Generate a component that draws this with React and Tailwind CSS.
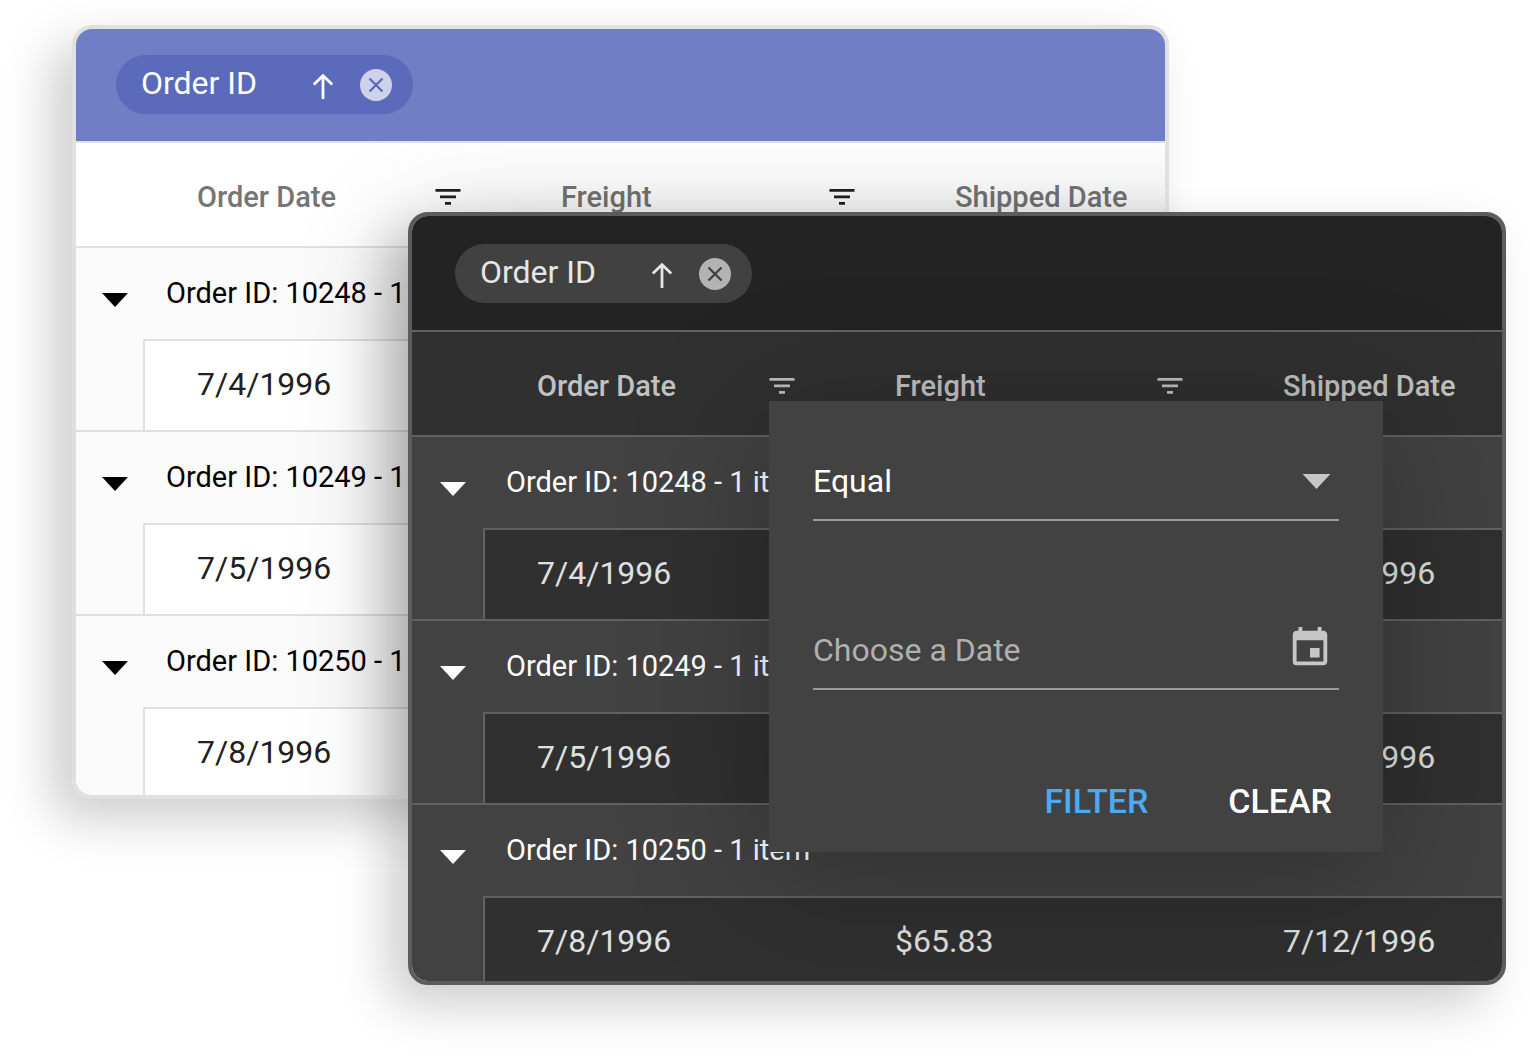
import { useState } from 'react'
import clsx from 'clsx'
import { MdEvent } from 'react-icons/md'

const pendingOrders = [
  { id: 10248, date: '7/4/1996' },
  { id: 10249, date: '7/5/1996' },
  { id: 10250, date: '7/8/1996' },
]

const shippedOrders = [
  { id: 10248, date: '7/4/1996', shipped: '7/16/1996' },
  { id: 10249, date: '7/5/1996', shipped: '7/10/1996' },
  { id: 10250, date: '7/8/1996', freight: '$65.83', shipped: '7/12/1996' },
]

const themes = {
  light: {
    line: 'border-[#e0e0e0]',
    bar: 'h-28 pl-10 pt-[26px] bg-[#707ec6]',
    chip: 'bg-[#5c6abb] text-white',
    close: 'text-[#ced2eb]',
    cross: 'stroke-[#5c6abb]',
    head: 'bg-white text-[#757575]',
    filter: 'text-[#212121]',
    group: 'bg-[#fafafa] text-black',
    cell: 'bg-white text-[#212121]',
    indentCol: 'w-[67px]',
    dateCol: 'w-[364px]',
    freightCol: 'w-[394px]',
    caret: 'pl-[26px]',
    firstInset: 'pl-[52px]',
    inset: 'pl-[54px]',
    lastRow: 'h-[88px]',
  },
  dark: {
    line: 'border-[#616161]',
    bar: 'h-[114px] pl-[43px] pt-7 bg-[#232323]',
    chip: 'bg-[#414141] text-[#e6e6e6]',
    close: 'text-[#b3b3b3]',
    cross: 'stroke-[#414141]',
    head: 'bg-[#303030] text-[#c1c1c1]',
    filter: 'text-[#bdbdbd]',
    group: 'bg-[#424242] text-white',
    cell: 'bg-[#303030] text-[#e0e0e0]',
    indentCol: 'w-[71px]',
    dateCol: 'w-[358px]',
    freightCol: 'w-[388px]',
    caret: 'pl-7',
    firstInset: 'pl-[52px]',
    inset: 'pl-[54px]',
    lastRow: 'h-[85px]',
  },
}

function ArrowUp() {
  return (
    <svg viewBox="0 0 32 32" className="size-8" fill="none" stroke="currentColor" strokeWidth="2.8">
      <path d="M16 30V7M6.8 15.6L16 6.6l9.2 9" />
    </svg>
  )
}

function CloseCircle({ cross }) {
  return (
    <svg viewBox="0 0 32 32" className="size-8">
      <circle cx="16" cy="16" r="16" fill="currentColor" />
      <path d="M9.5 9.5l13 13M22.5 9.5l-13 13" className={cross} strokeWidth="2.4" />
    </svg>
  )
}

function FilterIcon() {
  return (
    <svg viewBox="0 0 26 16" className="w-[26px] h-4" fill="currentColor">
      <path d="M.5 0h25v2.7H.5zM5 6.5h16v2.7H5zM10 13h6v2.7h-6z" />
    </svg>
  )
}

function Caret({ className }) {
  return (
    <svg viewBox="0 0 26 14" className={className} fill="currentColor">
      <path d="M0 0h26L13 14z" />
    </svg>
  )
}

function HeaderCell({ t, filter, children }) {
  return (
    <th scope="col" className={clsx('h-[105px] border-t-2 pt-9 pr-[46px] align-top text-left font-medium', t.inset, t.line, t.head)}>
      <div className="flex justify-between whitespace-nowrap">
        {children}
        {filter && (
          <button type="button" aria-label={`Filter ${children}`} className={clsx('flex h-9 items-center', t.filter)}>
            <FilterIcon />
          </button>
        )}
      </div>
    </th>
  )
}

function OrderGrid({ t, orders }) {
  const [closed, setClosed] = useState([])
  const toggle = (id) =>
    setClosed(closed.includes(id) ? closed.filter((c) => c !== id) : [...closed, id])

  return (
    <>
      <div className={t.bar}>
        <div className={clsx('flex h-[59px] w-[297px] items-center rounded-full pl-[25px] pr-[21px] text-[32px] leading-9', t.chip)}>
          <span className="flex-1 pb-1">Order ID</span>
          <button type="button" aria-label="Sort ascending" className="mr-[21px]">
            <ArrowUp />
          </button>
          <button type="button" aria-label="Remove grouping" className={t.close}>
            <CloseCircle cross={t.cross} />
          </button>
        </div>
      </div>
      <table className="w-full table-fixed border-separate border-spacing-0 text-[29px] leading-9">
        <colgroup>
          <col className={t.indentCol} />
          <col className={t.dateCol} />
          <col className={t.freightCol} />
          <col />
        </colgroup>
        <thead>
          <tr>
            <td className={clsx('border-t-2', t.line, t.head)} />
            <HeaderCell t={t} filter>Order Date</HeaderCell>
            <HeaderCell t={t} filter>Freight</HeaderCell>
            <HeaderCell t={t}>Shipped Date</HeaderCell>
          </tr>
        </thead>
        {orders.map((order, i) => {
          const cell = clsx('border-t-2 pt-[25px] align-top text-[32px]', t.line, t.cell, i === orders.length - 1 ? t.lastRow : 'h-[91px]')
          return (
            <tbody key={order.id}>
              <tr className={t.group}>
                <td className={clsx('h-[93px] border-t-2 pt-3', t.caret, t.line)}>
                  <button type="button" aria-label={`Toggle order ${order.id}`} className="block" onClick={() => toggle(order.id)}>
                    <Caret className="w-[26px] h-3.5" />
                  </button>
                </td>
                <td colSpan={3} className={clsx('border-t-2 pt-[27px] pl-[23px] align-top', t.line)}>
                  Order ID: {order.id} - 1 item
                </td>
              </tr>
              {!closed.includes(order.id) && (
                <tr>
                  <td className={t.group} />
                  <td className={clsx('border-l-2', t.firstInset, cell)}>{order.date}</td>
                  <td className={clsx(t.inset, cell)}>{order.freight}</td>
                  <td className={clsx(t.inset, cell)}>{order.shipped}</td>
                </tr>
              )}
            </tbody>
          )
        })}
      </table>
    </>
  )
}

function FilterPopup() {
  return (
    <form
      className="absolute top-[185px] left-[357px] w-[614px] bg-[#424242] px-11 pt-[53px] pb-6 text-[32px] leading-[54px] text-white shadow-[0_24px_120px_10px_rgba(0,0,0,0.25)]"
      onSubmit={(e) => e.preventDefault()}
    >
      <div className="relative">
        <select aria-label="Operator" defaultValue="Equal" className="block h-[67px] w-full appearance-none border-b-2 border-[#9a9a9a] pb-3 outline-none">
          <option>Equal</option>
          <option>Not Equal</option>
          <option>Greater Than</option>
          <option>Less Than</option>
        </select>
        <Caret className="pointer-events-none absolute top-5 right-2 h-[15px] w-[29px] text-[#c6c6c6]" />
      </div>
      <div className="mt-[102px] flex h-[67px] items-start border-b-2 border-[#9a9a9a]">
        <input
          type="text"
          aria-label="Choose a Date"
          placeholder="Choose a Date"
          className="h-[54px] min-w-0 flex-1 outline-none placeholder:text-[#b0b0b0]"
        />
        <button type="button" aria-label="Open calendar" className="mt-0.5 mr-1.5 text-[#c6c6c6]">
          <MdEvent className="size-[46px]" />
        </button>
      </div>
      <div className="mt-[84px] flex justify-end gap-20 pr-[7px] text-[34px] font-medium">
        <button type="submit" className="text-[#4aabf5]">FILTER</button>
        <button type="reset">CLEAR</button>
      </div>
    </form>
  )
}

export default function App() {
  return (
    <main className="grid min-h-screen items-start overflow-hidden bg-white font-[Roboto,sans-serif]">
      <section className="relative col-start-1 row-start-1 mt-[25px] mr-[361px] ml-[72px] rounded-[20px] border-4 border-[#e0e0e0] shadow-[-20px_20px_50px_rgba(0,0,0,0.2)]">
        <div className="relative overflow-hidden rounded-2xl">
          <OrderGrid t={themes.light} orders={pendingOrders} />
          {/* soft shade that the front grid casts on this one only */}
          <div className="pointer-events-none absolute top-[183px] -right-[340px] -bottom-[190px] left-[332px] rounded-[20px] shadow-[0_20px_110px_rgba(0,0,0,0.25)]" />
        </div>
      </section>
      <section className="relative col-start-1 row-start-1 mt-[212px] mr-6 mb-[72px] ml-[408px] rounded-[20px] border-4 border-[#5c5c5c] shadow-[-20px_20px_50px_rgba(0,0,0,0.2)]">
        <div className="relative overflow-hidden rounded-2xl">
          <OrderGrid t={themes.dark} orders={shippedOrders} />
          <FilterPopup />
        </div>
      </section>
    </main>
  )
}
